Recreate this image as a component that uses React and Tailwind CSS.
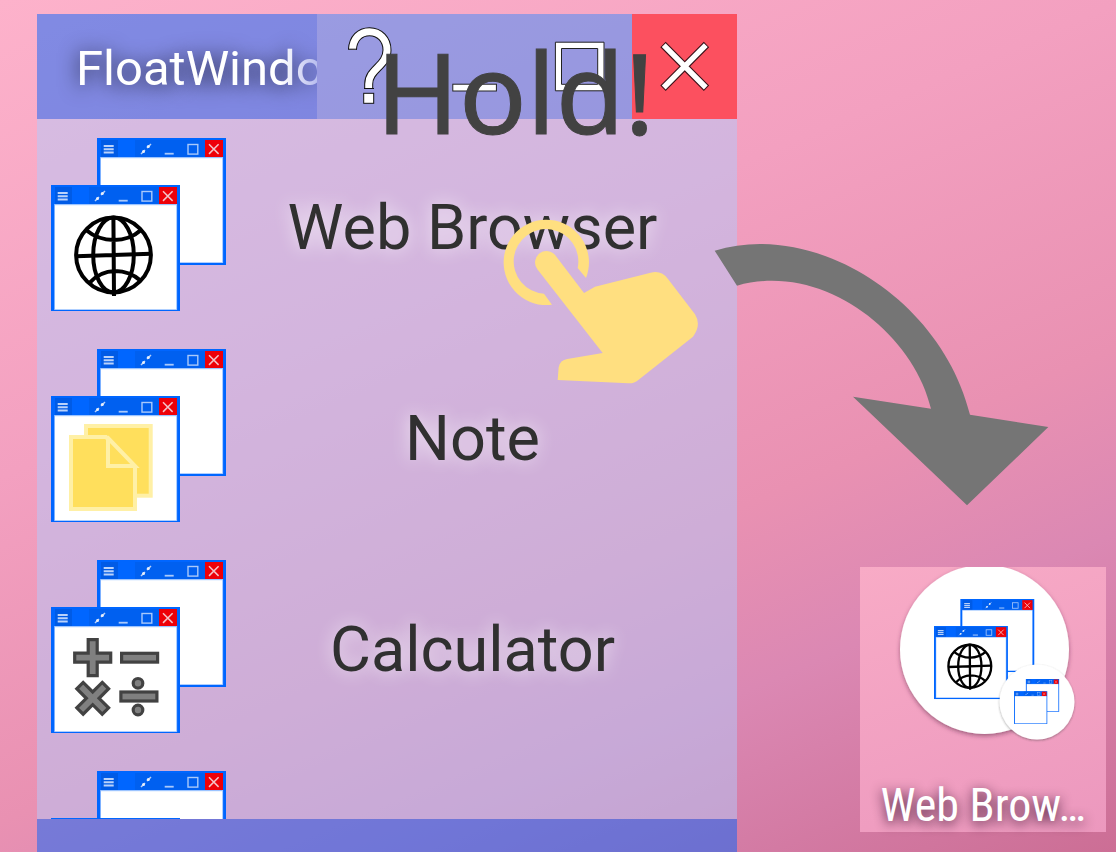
const Win = ({ x, y }) => (
  <g transform={`translate(${x} ${y})`}>
    <rect width="129" height="127" fill="#0066ff" />
    <rect x="4" y="2" width="17" height="17" fill="#005be6" />
    <rect x="38" y="2" width="70" height="17" fill="#0060f0" />
    <rect x="108" y="2" width="18" height="17.5" fill="#ee0008" />
    <rect x="3.2" y="19" width="122.9" height="106" fill="#9cc4ff" />
    <rect x="4" y="20.2" width="121.2" height="104" fill="#fff" />
    <path d="M6.7 8h10M6.7 11.3h10M6.7 14.6h10" stroke="#b9d2fb" strokeWidth="2" />
    <path d="M44 16l4-4M50 10l4-4" stroke="#b7d0f8" strokeWidth="1.5" />
    <circle cx="46.5" cy="13.5" r="1.5" fill="#e6eefb" />
    <circle cx="51.3" cy="8.5" r="1.5" fill="#e6eefb" />
    <path d="M67.7 15.7h9" stroke="#a9c9fb" strokeWidth="1.8" />
    <rect x="91" y="6.5" width="9.8" height="9.6" fill="none" stroke="#a9c9fb" strokeWidth="1.4" />
    <path d="M112 6.3l9.6 9.6M121.6 6.3L112 15.9" stroke="#f3c3c8" strokeWidth="1.5" />
  </g>
);

const Globe = () => (
  <g fill="none" stroke="#000" strokeWidth="4">
    <circle cx="62.5" cy="117" r="37.4" />
    <ellipse cx="62.5" cy="117" rx="20.3" ry="37.4" />
    <path d="M62.4 79L63 158M25 118.3L100 115.7M35 92Q47 102 63 102Q79 102 90 92M38 145.3Q49 133.2 64 133Q79 133 90 143" />
  </g>
);

const Note = () => (
  <g fill="#ffdf5c" stroke="#fff0a6" strokeWidth="4">
    <rect x="35" y="77" width="64.7" height="69.7" />
    <path d="M20 88H55L84 118V160H20Z" />
    <path d="M57 89V117H84L56 88" />
  </g>
);

const plusPath = "M-4.5 -18h9v13.5h13.5v9h-13.5v13.5h-9v-13.5h-13.5v-9h13.5z";

const Calculator = () => (
  <g fill="#808080" stroke="#424242" strokeWidth="3.2">
    <path d={plusPath} transform="translate(41.7 97.7)" />
    <rect x="70.6" y="93.3" width="36" height="8.8" />
    <path d={plusPath} transform="translate(41.7 138.3) rotate(45)" />
    <rect x="69.9" y="132" width="36" height="9" />
    <circle cx="87" cy="123.3" r="4.8" />
    <circle cx="87" cy="150" r="4.8" />
  </g>
);

const AppIcon = ({ children }) => (
  <svg viewBox="0 0 175 173" className="h-[173px] w-[175px] shrink-0" aria-hidden="true">
    <Win x={46} y={0} />
    <Win x={0} y={47} />
    {children}
  </svg>
);

const apps = [
  { name: "Web Browser", glyph: <Globe /> },
  { name: "Note", glyph: <Note /> },
  { name: "Calculator", glyph: <Calculator /> },
];

const rowClass = "flex w-full items-center py-[19px] pr-[18px] pl-3.5 text-center";

function Outlined({ d, width }) {
  return (
    <>
      <path d={d} fill="none" stroke="#111" strokeWidth={width + 2} />
      <path d={d} fill="none" stroke="#fff" strokeWidth={width} />
    </>
  );
}

function TitleButton({ label, close, children }) {
  return (
    <button
      aria-label={label}
      className={close ? "size-[105px] shrink-0 bg-[#fc505f]" : "size-[105px] shrink-0 bg-[#3a8afc]/50"}
    >
      <svg viewBox="0 0 105 105" className="size-full" aria-hidden="true">
        {children}
      </svg>
    </button>
  );
}

function FloatingWindow() {
  return (
    <section className="flex min-w-0 flex-1 flex-col">
      <header className="flex h-[105px] shrink-0">
        <div className="min-w-0 flex-1 bg-[#0664fc]/50">
          <h1 className="overflow-hidden pt-[26px] pb-[22px] pl-[39px] text-[49px] leading-[57px] whitespace-nowrap text-white [mask-image:linear-gradient(to_right,#000_calc(100%-36px),rgba(0,0,0,0.45))] [text-shadow:0_2px_20px_rgba(0,0,0,0.8)]">
            FloatWindow
          </h1>
        </div>
        <TitleButton label="Help">
          <Outlined width={7} d="M35.5 35.5C36 24.5 43 17.7 52.5 17.7C62.5 17.7 70 25.5 70 36C70 52 51.7 55 51.7 70V74.5" />
          <path d="M31 35.2h9M47 74.5h10" stroke="#111" />
          <rect x="46.7" y="79.3" width="10" height="10" fill="#fff" stroke="#111" />
        </TitleButton>
        <TitleButton label="Minimize">
          <rect x="30.8" y="70.2" width="43.6" height="6.8" fill="#fff" stroke="#222" />
        </TitleButton>
        <TitleButton label="Maximize">
          <path d="M28.4 28.2H77V76.8H28.4ZM34.5 34.5V70.3H70.7V34.5Z" fill="#fff" fillRule="evenodd" stroke="#222" />
        </TitleButton>
        <TitleButton label="Close" close>
          <path d="M31 30.5L74.5 74.2M74.5 30.5L31 74.2" stroke="#3a1018" strokeWidth="7.6" strokeLinecap="butt" />
          <path d="M31.7 31.2L73.8 73.5M73.8 31.2L31.7 73.5" stroke="#fff" strokeWidth="5.4" />
        </TitleButton>
      </header>
      <ul className="min-h-0 flex-1 overflow-hidden bg-[#b4cafc]/50">
        {apps.map((app) => (
          <li key={app.name}>
            <button className={rowClass}>
              <AppIcon>{app.glyph}</AppIcon>
              <span className="flex-1 pt-1.5 text-[63px] leading-[72px] text-[#303030] [text-shadow:0_0_18px_rgba(255,255,255,0.8)]">
                {app.name}
              </span>
            </button>
          </li>
        ))}
        <li>
          <button aria-label="More" className={rowClass}>
            <AppIcon />
          </button>
        </li>
      </ul>
      <footer className="h-[33px] shrink-0 bg-[#0664fc]/50" />
    </section>
  );
}

function Shortcut() {
  return (
    <a
      href="#web-browser"
      className="flex h-[265px] w-[246px] flex-col justify-between bg-linear-160 from-[#f8abc6] to-[#ec98be] text-center"
    >
      <svg viewBox="0 0 246 190" className="h-[190px] w-full" aria-hidden="true">
        <defs>
          <filter id="lift" x="-20%" y="-20%" width="140%" height="140%">
            <feDropShadow dx="0" dy="2" stdDeviation="2" floodColor="#50203a" floodOpacity="0.5" />
          </filter>
          <filter id="edge" x="-20%" y="-20%" width="140%" height="140%">
            <feDropShadow dx="0" dy="1" stdDeviation="1" floodColor="#333" floodOpacity="0.45" />
          </filter>
        </defs>
        <circle cx="124.5" cy="82.4" r="84.5" fill="#fff" filter="url(#lift)" />
        <g transform="translate(74 32) scale(0.573 0.575)">
          <Win x={46} y={0} />
          <Win x={0} y={47} />
          <Globe />
        </g>
        <circle cx="177" cy="135" r="37.5" fill="#fff" filter="url(#edge)" />
        <g transform="translate(154 112) scale(0.258)">
          <Win x={46} y={0} />
          <Win x={0} y={47} />
        </g>
      </svg>
      <span className="pb-0.5 font-['Roboto_Condensed','Liberation_Sans_Narrow',Roboto,sans-serif] text-[46px] leading-[50px] whitespace-nowrap text-white [text-shadow:0_3px_12px_rgba(50,10,40,0.9)]">
        Web Brow…
      </span>
    </a>
  );
}

export default function App() {
  return (
    <main className="relative flex h-screen overflow-hidden bg-[linear-gradient(157deg,#fdb2cb_0%,#f3a0c0_36%,#e991b2_62%,#db88b3_76%,#cc6e95_100%)] pt-3.5 pl-[37px] font-[Roboto,sans-serif]">
      <FloatingWindow />
      <aside className="flex w-[379px] shrink-0 items-end justify-end pr-2.5 pb-5">
        <Shortcut />
      </aside>
      <p className="pointer-events-none absolute top-[14px] left-[376px] font-['Noto_Sans',sans-serif] text-[112px] leading-[154px] text-[#424242] [-webkit-text-stroke:1px_#424242]">
        Hold!
      </p>
      <svg viewBox="0 0 810 630" className="pointer-events-none absolute top-[190px] left-[480px] h-[210px] w-[270px]" fill="#ffdf80" aria-hidden="true">
        <path d="M318 264L293 234A97 97 0 1 0 192 311L216 344A128 128 0 1 1 318 264Z" />
        <path d="M172 238A34 34 0 0 1 227 197L312 309L345 290L512 248Q545 240 564 267L645 373Q665 405 639 440L475 570Q462 581 445 580L233 570L236 532Q240 510 262 507L368 489Z" />
      </svg>
      <svg viewBox="0 0 1110 900" className="pointer-events-none absolute top-[220px] left-[700px] h-[300px] w-[370px]" fill="#757575" aria-hidden="true">
        <path d="M44 92C345 0 725 238 810 584L1045 621L801 856L459 530L693 566C640 340 370 124 111 197Z" />
      </svg>
    </main>
  );
}
